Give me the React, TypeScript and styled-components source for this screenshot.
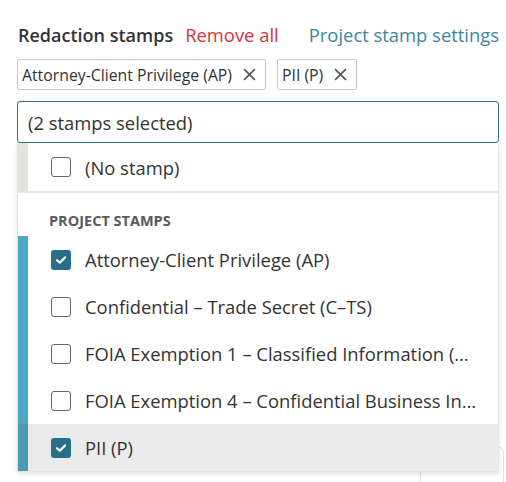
import React from 'react';
import styled, { createGlobalStyle, css } from 'styled-components';

const GlobalStyle = createGlobalStyle`
	html, body {
		margin: 0;
		padding: 0;
		background: #ffffff;
		font-family: 'Open Sans', 'Noto Sans', sans-serif;
		color: #333333;
	}
`;

const stamps = [
	{ label: 'Attorney-Client Privilege (AP)', checked: true },
	{ label: 'Confidential – Trade Secret (C–TS)', checked: false },
	{ label: 'FOIA Exemption 1 – Classified Information (TS)', checked: false },
	{ label: 'FOIA Exemption 4 – Confidential Business Information', checked: false },
	{ label: 'PII (P)', checked: true, hovered: true },
];

const App = () => {
	return (
		<>
			<GlobalStyle />
			<Page>
				<Field>
					<HeaderRow>
						<Title>Redaction stamps</Title>
						<RemoveLink>Remove all</RemoveLink>
						<SettingsLink>Project stamp settings</SettingsLink>
					</HeaderRow>
					<TagList>
						<Tag>
							Attorney-Client Privilege (AP)
							<CloseIcon />
						</Tag>
						<Tag>
							PII (P)
							<CloseIcon />
						</Tag>
					</TagList>
					<SelectWrap>
						<SelectBox>(2 stamps selected)</SelectBox>
						<Menu>
							<NoStampRow>
								<Checkbox checked={false} />
								<OptionLabel>(No stamp)</OptionLabel>
							</NoStampRow>
							<GroupHeader>Project stamps</GroupHeader>
							<GroupList>
								{stamps.map((s) => (
									<OptionRow key={s.label} $hovered={!!s.hovered}>
										<Checkbox checked={s.checked} />
										<OptionLabel>{s.label}</OptionLabel>
									</OptionRow>
								))}
							</GroupList>
						</Menu>
					</SelectWrap>
				</Field>
				<Divider />
				<Footer>
					<GhostButton />
				</Footer>
			</Page>
		</>
	);
};

const CloseIcon = () => (
	<svg width="13" height="13" viewBox="0 0 12 12">
		<path d="M1 1 L11 11 M11 1 L1 11" stroke="#555" strokeWidth="1.5" fill="none" />
	</svg>
);

const Checkbox = ({ checked }: { checked: boolean }) => (
	<Box $checked={checked}>
		{checked && (
			<svg width="12" height="10" viewBox="0 0 12 10">
				<path d="M2 5.2 L4.8 7.8 L10 2.4" stroke="#fff" strokeWidth="2.2" fill="none" strokeLinecap="round" strokeLinejoin="round" />
			</svg>
		)}
	</Box>
);

const Page = styled.div`
	width: 506px;
	height: 482px;
	overflow: hidden;
	display: flex;
	flex-direction: column;
`;

const Field = styled.div`
	padding: 22px 7px 0 17px;
	display: flex;
	flex-direction: column;
`;

const HeaderRow = styled.div`
	display: flex;
	align-items: baseline;
	height: 26px;
	font-size: 18.4px;
	line-height: 25px;
`;

const Title = styled.span`
	font-weight: 600;
	color: #333333;
	margin-left: 1px;
	font-size: 18px;
`;

const RemoveLink = styled.span`
	color: #d8343e;
	margin-left: 12px;
`;

const SettingsLink = styled.span`
	color: #3a879d;
	margin-left: auto;
`;

const TagList = styled.div`
	display: flex;
	gap: 11px;
	margin-top: 11px;
`;

const Tag = styled.div`
	display: flex;
	align-items: center;
	gap: 11px;
	height: 29px;
	padding: 0 9px 0 4px;
	border: 1px solid #c9c9c9;
	border-radius: 2px;
	font-size: 15.8px;
	color: #333333;
`;

const SelectWrap = styled.div`
	position: relative;
	margin-top: 11px;
`;

const SelectBox = styled.div`
	height: 40px;
	display: flex;
	align-items: center;
	padding: 0 10px;
	border: 1px solid #2f6f85;
	border-radius: 3px;
	font-size: 18.4px;
	color: #333333;
`;

const Menu = styled.div`
	position: absolute;
	top: 42px;
	left: 0;
	right: 0;
	z-index: 2;
	background: #ffffff;
	border: 1px solid #e4e4e4;
	border-top: none;
	box-shadow: 0 2px 4px rgba(0, 0, 0, 0.12);
`;

const rowBase = css`
	display: flex;
	align-items: center;
	gap: 14px;
	padding-left: 23px;
`;

const NoStampRow = styled.div`
	${rowBase};
	height: 48px;
	border-left: 10px solid #e4e3e0;
	border-bottom: 2px solid #e7e7e7;
`;

const GroupHeader = styled.div`
	padding: 18px 0 0 31px;
	height: 25px;
	font-size: 14.5px;
	line-height: 20px;
	font-weight: 700;
	text-transform: uppercase;
	color: #5a5a5a;
`;

const GroupList = styled.div`
	border-left: 10px solid #4ea8c2;
`;

const OptionRow = styled.div<{ $hovered: boolean }>`
	${rowBase};
	height: 47px;
	background: ${(p) => (p.$hovered ? '#ebebeb' : '#ffffff')};
	${(p) =>
		p.$hovered &&
		css`
			margin-left: -10px;
			border-left: 10px solid #4a9bb2;
		`}
`;

const Box = styled.span<{ $checked: boolean }>`
	flex: none;
	width: 20px;
	height: 20px;
	box-sizing: border-box;
	border-radius: 3px;
	display: flex;
	align-items: center;
	justify-content: center;
	border: ${(p) => (p.$checked ? 'none' : '1.5px solid #666666')};
	background: ${(p) => (p.$checked ? '#286e86' : '#ffffff')};
`;

const OptionLabel = styled.span`
	font-size: 18.4px;
	color: #333333;
	white-space: nowrap;
	overflow: hidden;
	text-overflow: ellipsis;
	max-width: 393px;
`;

const Divider = styled.div`
	margin-top: 211px;
	height: 2px;
	background: #dcdcdc;
`;

const Footer = styled.div`
	display: flex;
	justify-content: flex-end;
	padding: 93px 2px 0 0;
`;

const GhostButton = styled.div`
	width: 82px;
	height: 40px;
	border: 1px solid #e2e2e2;
	border-radius: 5px;
`;

export default App;
